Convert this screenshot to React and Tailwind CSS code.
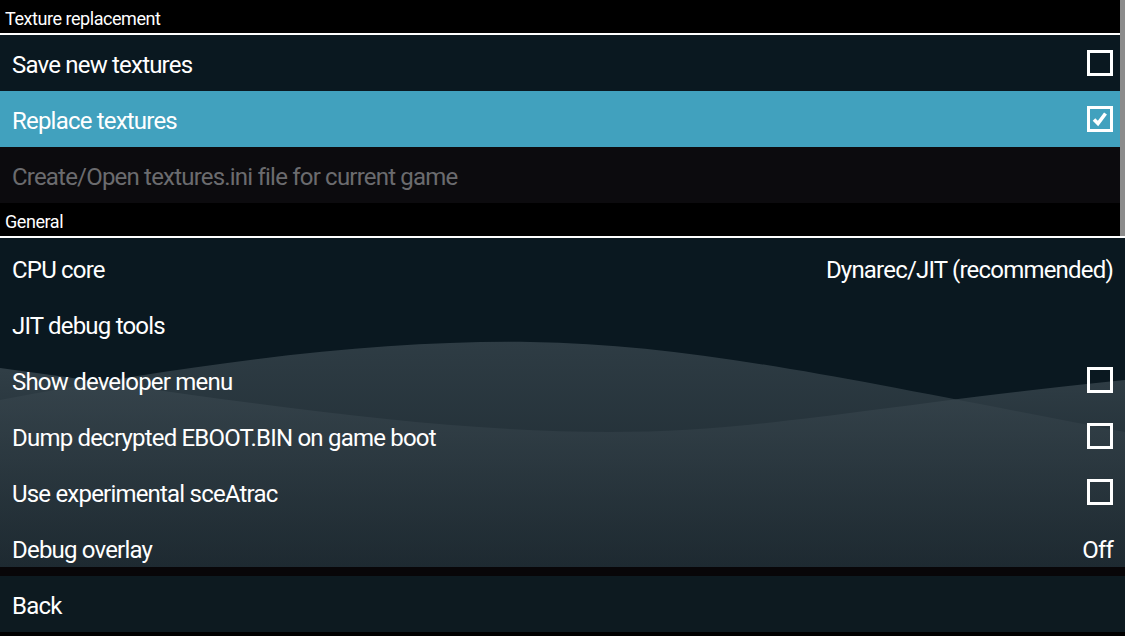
import React from 'react';

const font = { fontFamily: 'Roboto, "Liberation Sans", sans-serif' };

const Checkbox = ({ checked }) => (
    <div className="w-[26px] h-[26px] border-[3px] border-white flex items-center justify-center">
        {checked && (
            <svg width="18" height="18" viewBox="0 0 18 18">
                <path d="M3 9.5 L7 13.5 L14.5 3.5" fill="none" stroke="white" strokeWidth="3.6" />
            </svg>
        )}
    </div>
);

const Header = ({ title }) => (
    <div className="h-[35px] bg-black border-b-2 border-white flex items-center pl-[5px] pt-[3px] text-[18px] text-white tracking-[-0.45px]">
        {title}
    </div>
);

const Row = ({ label, value, check, className = '', textClass = 'text-white' }) => (
    <div className={`h-[56px] flex items-center justify-between pl-[12px] pr-[12px] ${className}`}>
        <span className={`text-[24px] pt-[3px] tracking-[-0.8px] ${textClass}`}>{label}</span>
        {check !== undefined && <Checkbox checked={check} />}
        {value && <span className="text-[24px] pt-[3px] tracking-[-0.8px] text-white">{value}</span>}
    </div>
);

// background wave decoration
const Waves = () => (
    <svg className="absolute inset-0" width="1125" height="636" viewBox="0 0 1125 636">
        <defs>
            <linearGradient id="wa" x1="0" y1="0" x2="0" y2="1">
                <stop offset="0" stopColor="#2e3c44" />
                <stop offset="1" stopColor="#131f26" />
            </linearGradient>
            <linearGradient id="wb" x1="0" y1="0" x2="0" y2="1">
                <stop offset="0" stopColor="#3a4850" stopOpacity="0.8" />
                <stop offset="1" stopColor="#18232a" stopOpacity="0.5" />
            </linearGradient>
        </defs>
        <rect width="1125" height="636" fill="#0a1820" />
        <path d="M0 400 C 200 362 380 340 530 342 C 700 345 850 380 1125 432 L1125 636 L0 636 Z" fill="url(#wa)" />
        <path d="M0 368 C 220 398 420 432 610 432 C 760 432 880 405 1125 380 L1125 636 L0 636 Z" fill="url(#wb)" />
    </svg>
);

export default function App() {
    return (
        <div className="relative w-[1125px] h-[636px] overflow-hidden" style={font}>
            <Waves />
            <div className="relative flex flex-col h-full">
                <div className="relative">
                    <Header title="Texture replacement" />
                    <Row label="Save new textures" check={false} className="bg-[#0a1820]" />
                    <Row label="Replace textures" check={true} className="bg-[#41a1be]" />
                    <Row label="Create/Open textures.ini file for current game" className="bg-[#0c0b0e]" textClass="text-[#6b6b6e]" />
                    <Header title="General" />
                    <div className="absolute right-0 top-0 w-[5px] h-[236px] bg-[#8c8c8c]" />
                </div>
                <div className="h-[329px] overflow-hidden pt-[2px]">
                    <Row label="CPU core" value="Dynarec/JIT (recommended)" />
                    <Row label="JIT debug tools" />
                    <Row label="Show developer menu" check={false} />
                    <Row label="Dump decrypted EBOOT.BIN on game boot" check={false} />
                    <Row label="Use experimental sceAtrac" check={false} />
                    <Row label="Debug overlay" value="Off" />
                </div>
                <div className="h-[9px] bg-[#080608]" />
                <Row label="Back" className="bg-[#0d1a20]" />
                <div className="flex-1 bg-black" />
            </div>
        </div>
    );
}
